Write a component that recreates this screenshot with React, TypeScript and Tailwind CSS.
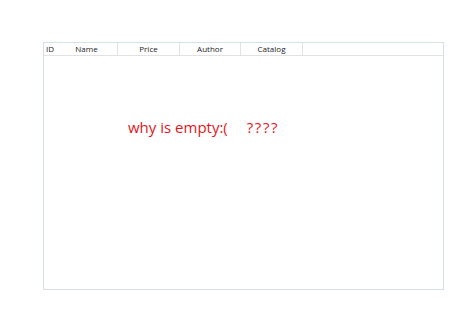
export default function App() {
  const cols = [
    { name: 'Name', w: 'w-[62px]' },
    { name: 'Price', w: 'w-[62px]' },
    { name: 'Author', w: 'w-[61px]' },
    { name: 'Catalog', w: 'w-[62px]' },
  ];
  return (
    <div className="w-[474px] h-[325px] bg-white pt-[42px] pl-[43px] font-['Open_Sans',sans-serif]">
      <div className="w-[401px] h-[248px] border border-[#d3e0e6] bg-white flex flex-col">
        {/* header */}
        <div className="h-[13px] flex border-b border-[#e2e2e2] text-[8px] leading-[12px] text-[#222]">
          <div className="w-[12px] pl-[2px]">ID</div>
          {cols.map((c) => (
            <div key={c.name} className={`${c.w} border-r border-[#e2e2e2] text-center`}>
              {c.name}
            </div>
          ))}
        </div>
        {/* body */}
        <div className="flex-1 pl-[84px] pt-[61px]">
          <p className="text-[15px] leading-[20px] text-[#e4141c] whitespace-pre">
            why is empty:(<span className="inline-block w-[19px]" />
            <span className="tracking-[1.6px]">????</span>
          </p>
        </div>
      </div>
    </div>
  );
}
